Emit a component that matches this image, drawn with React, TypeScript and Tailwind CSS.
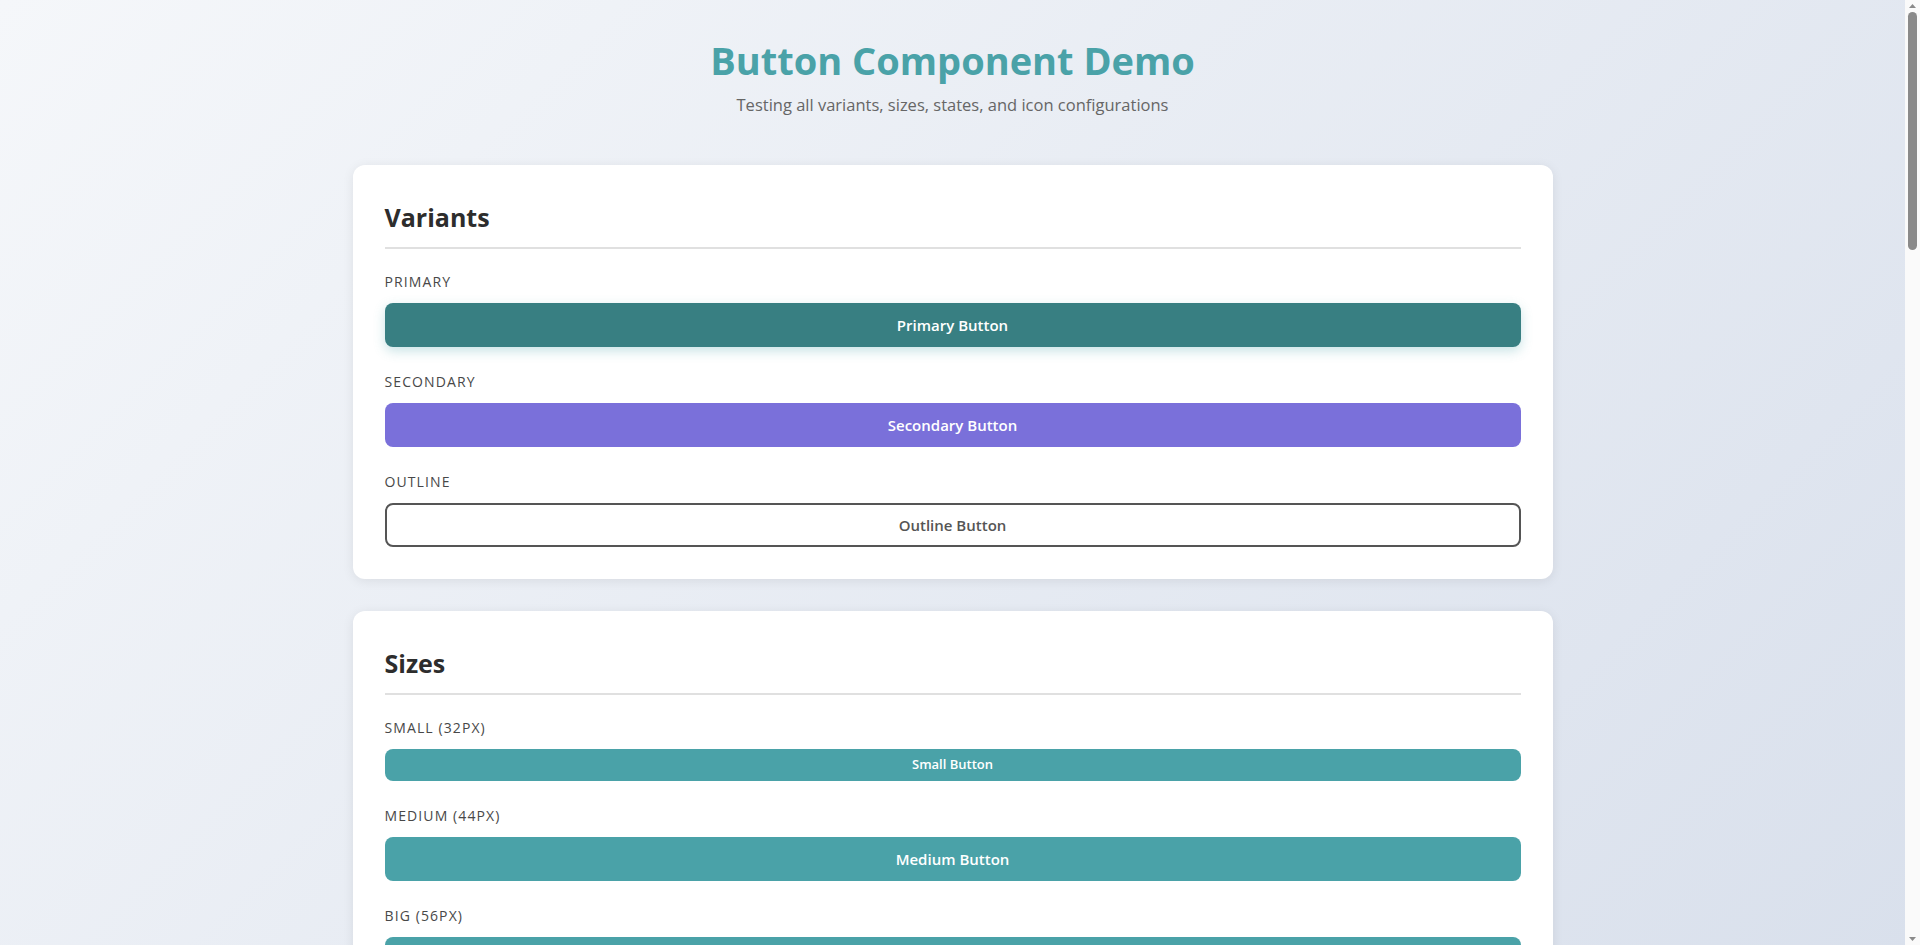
import React from "react";
import { ArrowRight, Plus, Download, Heart, Check, Loader2 } from "lucide-react";

type Variant = "primary" | "secondary" | "outline" | "teal";
type Size = "small" | "medium" | "big";

const variantClass: Record<Variant, string> = {
  primary: "bg-[#387f82] text-white shadow-[0_4px_12px_rgba(74,162,168,0.3)]",
  secondary: "bg-[#7a70da] text-white",
  outline: "bg-white text-[#555555] border-2 border-[#555555]",
  teal: "bg-[#4aa2a8] text-white",
};

const sizeClass: Record<Size, string> = {
  small: "h-8 text-[13px]",
  medium: "h-11 text-[15px]",
  big: "h-14 text-[17px]",
};

function Btn({
  variant = "teal",
  size = "medium",
  children,
  disabled,
  iconOnly,
}: {
  variant?: Variant;
  size?: Size;
  children: React.ReactNode;
  disabled?: boolean;
  iconOnly?: boolean;
}) {
  return (
    <button
      type="button"
      disabled={disabled}
      className={
        "flex items-center justify-center gap-2 rounded-lg font-semibold " +
        (iconOnly ? "w-11 " : "w-full ") +
        variantClass[variant] +
        " " +
        sizeClass[size] +
        (disabled ? " opacity-50 cursor-not-allowed" : " cursor-pointer")
      }
    >
      {children}
    </button>
  );
}

function Group({ label, children }: { label: string; children: React.ReactNode }) {
  return (
    <div className="flex flex-col">
      <div className="mb-[10px] text-[14px] leading-[22px] font-medium uppercase tracking-[1.1px] text-[#484848]">
        {label}
      </div>
      {children}
    </div>
  );
}

function Card({ title, children }: { title: string; children: React.ReactNode }) {
  return (
    <section className="rounded-xl bg-white p-8 shadow-[0_2px_12px_rgba(0,0,0,0.08)]">
      <h2 className="mb-[22px] border-b-2 border-[#e0e0e0] pb-[10px] text-[25px] leading-[40px] font-bold text-[#2d2d2d]">
        {title}
      </h2>
      <div className="flex flex-col gap-6">{children}</div>
    </section>
  );
}

function FakeScrollbar() {
  return (
    <div className="fixed right-0 top-0 z-10 flex h-screen w-[15px] flex-col items-center bg-[#fafafa]">
      <svg width="9" height="6" viewBox="0 0 9 6" className="mt-[3px]">
        <path d="M4.5 1 L8 5 L1 5 Z" fill="#8a8a8a" />
      </svg>
      <div className="mt-[3px] h-[238px] w-[9px] rounded-full bg-[#8a8a8a]" />
      <svg width="9" height="6" viewBox="0 0 9 6" className="mt-auto mb-[3px]">
        <path d="M1 1 L8 1 L4.5 5 Z" fill="#8a8a8a" />
      </svg>
    </div>
  );
}

const sizes: { key: Size; label: string; text: string }[] = [
  { key: "small", label: "Small (32px)", text: "Small Button" },
  { key: "medium", label: "Medium (44px)", text: "Medium Button" },
  { key: "big", label: "Big (56px)", text: "Big Button" },
];

const variants: { key: Variant; label: string; text: string }[] = [
  { key: "primary", label: "Primary", text: "Primary Button" },
  { key: "secondary", label: "Secondary", text: "Secondary Button" },
  { key: "outline", label: "Outline", text: "Outline Button" },
];

export default function App() {
  return (
    <div className="min-h-screen bg-fixed bg-[linear-gradient(135deg,#f5f7fa_0%,#d9e0ec_100%)] pr-[15px] font-['Open_Sans','Noto_Sans',sans-serif]">
      <FakeScrollbar />
      <div className="mx-auto w-[1200px] pt-9 pb-9">
        <header className="mb-[48px] flex flex-col items-center">
          <h1 className="text-[38px] leading-[48px] font-bold text-[#4aa2a8]">Button Component Demo</h1>
          <p className="mt-[9px] text-[16.5px] leading-[24px] text-[#666666]">
            Testing all variants, sizes, states, and icon configurations
          </p>
        </header>

        <div className="flex flex-col gap-8">
          <Card title="Variants">
            {variants.map((v) => (
              <Group key={v.key} label={v.label}>
                <Btn variant={v.key}>{v.text}</Btn>
              </Group>
            ))}
          </Card>

          <Card title="Sizes">
            {sizes.map((s) => (
              <Group key={s.key} label={s.label}>
                <Btn size={s.key}>{s.text}</Btn>
              </Group>
            ))}
          </Card>

          <Card title="States">
            <Group label="Default">
              <Btn variant="primary">Default Button</Btn>
            </Group>
            <Group label="Disabled">
              <Btn variant="primary" disabled>
                Disabled Button
              </Btn>
            </Group>
            <Group label="Loading">
              <Btn variant="primary">
                <Loader2 size={18} />
                Loading...
              </Btn>
            </Group>
          </Card>

          <Card title="Icon Left">
            <Group label="Primary with icon">
              <Btn variant="primary">
                <Plus size={18} />
                Add Item
              </Btn>
            </Group>
            <Group label="Secondary with icon">
              <Btn variant="secondary">
                <Download size={18} />
                Download
              </Btn>
            </Group>
            <Group label="Outline with icon">
              <Btn variant="outline">
                <Heart size={18} />
                Favorite
              </Btn>
            </Group>
          </Card>

          <Card title="Icon Right">
            <Group label="Primary with icon">
              <Btn variant="primary">
                Continue
                <ArrowRight size={18} />
              </Btn>
            </Group>
            <Group label="Secondary with icon">
              <Btn variant="secondary">
                Next Step
                <ArrowRight size={18} />
              </Btn>
            </Group>
            <Group label="Outline with icon">
              <Btn variant="outline">
                Confirm
                <Check size={18} />
              </Btn>
            </Group>
          </Card>

          <Card title="Icon Only">
            {variants.map((v) => (
              <Group key={v.key} label={v.label}>
                <Btn variant={v.key} iconOnly>
                  <Plus size={20} />
                </Btn>
              </Group>
            ))}
          </Card>

          <Card title="Disabled Variants">
            {variants.map((v) => (
              <Group key={v.key} label={v.label + " Disabled"}>
                <Btn variant={v.key} disabled>
                  {v.text}
                </Btn>
              </Group>
            ))}
          </Card>
        </div>
      </div>
    </div>
  );
}
